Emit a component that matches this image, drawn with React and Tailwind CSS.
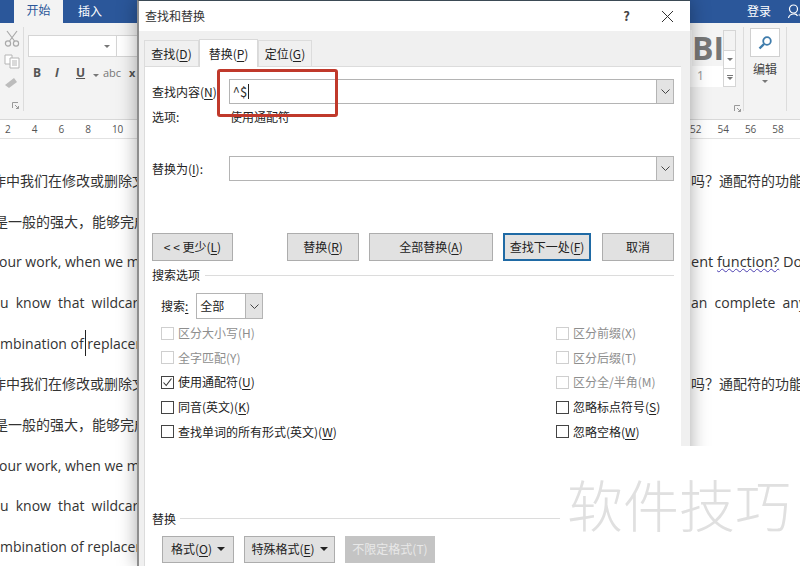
const cjk = "font-['Noto_Sans_CJK_SC','Liberation_Sans',sans-serif]";
const doc = "font-['Open_Sans','Noto_Sans_CJK_SC',sans-serif]";

const zh1 = { left: '作中我们在修改或删除文', right: '吗？通配符的功能', ml: '-ml-[8px]' };
const zh2 = { left: '是一般的强大，能够完成', right: '', ml: '-ml-[6px]' };
const en1 = { left: 'our work, when we m', right: '', ml: '-ml-[1px]' };
const en2 = { left: 'u know that wildcard', right: '', ml: '', size: '[word-spacing:3.5px]' };
const en3 = { left: 'mbination of replacer', right: '', ml: '' };

const lines = [
  zh1,
  zh2,
  { ...en1, wave: true },
  { ...en2, right: 'an complete any' },
  { ...en3, caret: true },
  zh1,
  zh2,
  en1,
  en2,
  en3,
];

function Chevron() {
  return (
    <svg width="9" height="5" viewBox="0 0 9 5">
      <path d="M0.5 0.5 L4.5 4.5 L8.5 0.5" fill="none" stroke="#444" strokeWidth="1" />
    </svg>
  );
}

function Caret() {
  return <span className="ml-[5px] inline-block h-0 w-0 border-x-[4px] border-t-[4px] border-x-transparent border-t-[#222] align-middle" />;
}

function SmallCaret() {
  return <span className="inline-block h-0 w-0 border-x-[3px] border-t-[3px] border-x-transparent border-t-[#777]" />;
}

function Launcher({ className }) {
  return (
    <svg width="7" height="7" viewBox="0 0 7 7" fill="none" stroke="#999" strokeWidth="1" className={className}>
      <path d="M0.5 6 V0.5 H6 M3 3 L6.5 6.5 M6.5 4 V6.5 H4" />
    </svg>
  );
}

function Btn({ className, children }) {
  return (
    <div className={`flex h-[28px] items-center justify-center border border-[#adadad] bg-[#e1e1e1] text-[12px] text-[#222] ${className}`}>
      {children}
    </div>
  );
}

function Combo({ text }) {
  return (
    <div className="flex h-[25px] w-[446px] items-center border border-[#b4b4b4] bg-white">
      <div className="flex h-full flex-1 items-center pl-[3px] text-[13px] text-[#333]">{text}</div>
      <div className="flex h-full w-[17px] items-center justify-center border-l border-[#b4b4b4] bg-[#e3e3e3]">
        <Chevron />
      </div>
    </div>
  );
}

function Check({ label, disabled, checked }) {
  return (
    <div className={`flex h-[24.6px] items-center gap-[4px] text-[12px] ${disabled ? 'text-[#8e8e8e]' : 'text-[#222]'}`}>
      <div className={`flex h-[13px] w-[13px] items-center justify-center border bg-white ${disabled ? 'border-[#cfcfcf]' : 'border-[#444]'}`}>
        {checked && (
          <svg width="11" height="11" viewBox="0 0 11 11">
            <path d="M1.5 5.5 L4.2 8.5 L9.5 1.5" fill="none" stroke="#333" strokeWidth="1.1" />
          </svg>
        )}
      </div>
      <span>{label}</span>
    </div>
  );
}

function U({ children }) {
  return <span className="underline underline-offset-2">{children}</span>;
}

function Ribbon() {
  return (
    <div className="flex h-[97px] justify-between bg-[#f3f3f3]">
      <div className="flex w-[137px] border-b border-[#d8d8d8]">
        <div className="flex w-[23px] flex-col items-center gap-[7px] pt-[7px]">
          <svg width="16" height="17" viewBox="0 0 16 17" fill="none" stroke="#a9a9a9" strokeWidth="1.2">
            <path d="M3 1 L10.5 11 M13 1 L5.5 11" />
            <circle cx="4" cy="13.5" r="2.6" />
            <circle cx="12" cy="13.5" r="2.6" />
          </svg>
          <svg width="16" height="15" viewBox="0 0 16 15" fill="#fff" stroke="#b5b5b5" strokeWidth="1">
            <path d="M1 1 H8 V10 H1 Z" />
            <path d="M6 4 H15 V14 H6 Z" />
            <path d="M8 7 H13 M8 9 H13 M8 11 H13" />
          </svg>
          <svg width="16" height="13" viewBox="0 0 16 13">
            <path d="M1 9 L10 2 L13 6 L5 12 Z" fill="#bcbcbc" />
          </svg>
          <Launcher className="ml-[7px] mt-[6px]" />
        </div>
        <div className="mt-[4px] h-[84px] w-px bg-[#dcdcdc]" />
        <div className="flex flex-col pl-[4px] pt-[12px]">
          <div className="flex h-[22px]">
            <div className="flex w-[89px] items-center justify-end border border-[#d5d5d5] bg-white pr-[6px]">
              <SmallCaret />
            </div>
            <div className="w-[20px] border-y border-[#d5d5d5] bg-white" />
          </div>
          <div className={`mt-[7px] flex items-center pl-[5px] text-[12px] font-bold text-[#555] ${doc}`}>
            <span className="w-[22px]">B</span>
            <span className="w-[21px] italic">I</span>
            <span className="w-[17px] underline">U</span>
            <span className="w-[10px]"><SmallCaret /></span>
            <span className="w-[26px] text-[11px] font-normal text-[#777]">abc</span>
            <span className="text-[11px]">x</span>
          </div>
        </div>
      </div>
      <div className="flex w-[110px] border-b border-[#d8d8d8]">
        <div className="mt-[7px] h-[57px] w-[33px] overflow-hidden bg-white pl-[2px]">
          <div className={`h-[36px] overflow-hidden bg-[#f4f4f4] text-[32px] font-bold leading-[36px] text-[#777] ${doc}`}>BI</div>
          <div className="pl-[5px] text-[12px] leading-[20px] text-[#999]">1</div>
        </div>
        <div className="mt-[7px] flex h-[57px] w-[13px] flex-col border border-[#d5d5d5]">
          <div className="h-[20px] border-b border-[#d5d5d5]" />
          <div className="flex h-[18px] items-center justify-center border-b border-[#d5d5d5] bg-white"><SmallCaret /></div>
          <div className="flex flex-1 flex-col items-center justify-center bg-white"><span className="mb-px h-px w-[6px] bg-[#777]" /><SmallCaret /></div>
        </div>
        <div className="ml-[7px] mt-[4px] h-[84px] w-px bg-[#dcdcdc]" />
        <div className="flex w-[42px] flex-col items-center pt-[5px]">
          <div className="flex h-[29px] w-[30px] items-center justify-center border border-[#d0d0d0] bg-white">
            <svg width="15" height="15" viewBox="0 0 15 15" fill="none" stroke="#3f7cac" strokeWidth="1.8">
              <circle cx="9" cy="6" r="3.8" />
              <path d="M6 9 L1.5 13.5" strokeWidth="2.4" />
            </svg>
          </div>
          <div className={`mt-[3px] text-[12px] text-[#444] ${cjk}`}>编辑</div>
          <span className="mt-[2px] flex"><SmallCaret /></span>
        </div>
        <div className="mt-[4px] h-[84px] w-px bg-[#dcdcdc]" />
      </div>
    </div>
  );
}

function Dialog() {
  return (
    <div className={`absolute left-[137px] top-0 flex h-[566px] w-[553px] flex-col border-l-2 border-t border-l-[#8e8e8e] border-t-[#3b4a55] bg-[#f0f0f0] shadow-[0_0_18px_rgba(0,0,0,0.35)] ${cjk}`}>
      <div className="flex h-[30px] shrink-0 items-center justify-between bg-white pl-[6px] pr-[16px] text-[12px] text-[#333]">
        <span>查找和替换</span>
        <div className="flex items-center gap-[31px]">
          <span className="text-[13px] font-bold text-[#444]">?</span>
          <svg width="13" height="13" viewBox="0 0 13 13">
            <path d="M1 1 L12 12 M12 1 L1 12" stroke="#333" strokeWidth="1" />
          </svg>
        </div>
      </div>
      <div className="flex h-[35px] shrink-0 items-end pl-[5px] text-[12px] text-[#222]">
        <div className="flex h-[26px] w-[55px] items-center justify-center border border-b-0 border-[#dcdcdc]">查找(<U>D</U>)</div>
        <div className="relative z-10 -mb-px flex h-[28px] w-[59px] items-center justify-center border border-b-0 border-[#d9d9d9] bg-white">替换(<U>P</U>)</div>
        <div className="flex h-[26px] w-[54px] items-center justify-center border border-b-0 border-[#dcdcdc]">定位(<U>G</U>)</div>
      </div>
      <div className="ml-[5px] flex w-[537px] flex-1 flex-col border-l border-t border-[#dcdcdc] bg-white px-[7px] text-[12px] text-[#222]">
        <div className="mt-[12px] flex items-center">
          <span className="w-[77px]">查找内容(<U>N</U>)</span>
          <Combo text={<><span>^$</span><span className="ml-px h-[15px] w-px bg-[#222]" /></>} />
        </div>
        <div className="mt-[4px] flex h-[18px] items-center">
          <span className="w-[78px]">选项:</span>
          <span>使用通配符</span>
        </div>
        <div className="mt-[30px] flex items-center">
          <span className="w-[77px]">替换为(<U>I</U>):</span>
          <Combo />
        </div>
        <div className="mt-[52px] flex">
          <Btn className="w-[81px]">&lt; &lt; 更少(<U>L</U>)</Btn>
          <Btn className="ml-[54px] w-[72px]">替换(<U>R</U>)</Btn>
          <Btn className="ml-[10px] w-[124px]">全部替换(<U>A</U>)</Btn>
          <Btn className="ml-[10px] w-[88px] border-2 border-[#1f6aa5]!">查找下一处(<U>F</U>)</Btn>
          <Btn className="ml-[11px] w-[72px]">取消</Btn>
        </div>
        <div className="mt-[5px] flex h-[18px] items-center gap-[5px] whitespace-nowrap">
          <span>搜索选项</span>
          <div className="h-px w-[470px] bg-[#dcdcdc]" />
        </div>
        <div className="ml-[9px] mt-[9px] flex items-center gap-[8px]">
          <span>搜索<span className="underline underline-offset-2">:</span></span>
          <div className="flex h-[26px] w-[67px] items-center border border-[#b4b4b4]">
            <span className="flex-1 pl-[3px] text-[12px]">全部</span>
            <div className="flex h-full w-[17px] items-center justify-center border-l border-[#b4b4b4] bg-[#e3e3e3]"><Chevron /></div>
          </div>
        </div>
        <div className="ml-[9px] mt-[2px] flex w-[522px] justify-between">
          <div className="flex flex-col">
            <Check disabled label="区分大小写(H)" />
            <Check disabled label="全字匹配(Y)" />
            <Check checked label={<>使用通配符(<U>U</U>)</>} />
            <Check label={<>同音(英文)(<U>K</U>)</>} />
            <Check label={<>查找单词的所有形式(英文)(<U>W</U>)</>} />
          </div>
          <div className="flex w-[127px] flex-col">
            <Check disabled label="区分前缀(X)" />
            <Check disabled label="区分后缀(T)" />
            <Check disabled label="区分全/半角(M)" />
            <Check label={<>忽略标点符号(<U>S</U>)</>} />
            <Check label={<>忽略空格(<U>W</U>)</>} />
          </div>
        </div>
        <div className="mt-[66px] flex h-[18px] items-center gap-[4px]">
          <span>替换</span>
          <div className="h-px w-[380px] bg-[#dcdcdc]" />
        </div>
        <div className="ml-[10px] mt-[8px] flex gap-[10px]">
          <Btn className="h-[27px]! w-[72px]">格式(<U>O</U>)<Caret /></Btn>
          <Btn className="h-[27px]! w-[91px]">特殊格式(<U>E</U>)<Caret /></Btn>
          <Btn className="h-[27px]! w-[90px] border-[#c4c4c4]! bg-[#c4c4c4]! text-[#e8e8e8]!">不限定格式(T)</Btn>
        </div>
      </div>
    </div>
  );
}

export default function App() {
  return (
    <div className="relative h-[566px] w-[800px] overflow-hidden bg-white">
      {/* word behind the dialog */}
      <div className={`flex h-[23px] bg-[#2b579a] text-[12px] text-white ${cjk}`}>
        <div className="ml-[14px] flex h-full w-[49px] items-center justify-center bg-[#f3f3f3] pb-[3px] text-[#2b579a]">开始</div>
        <div className="ml-[15px] pt-[2px]">插入</div>
        <div className="ml-auto mr-[16px] pt-[2px]">登录</div>
        <svg width="16" height="17" viewBox="0 0 15 17" fill="none" stroke="#fff" strokeWidth="1.2" className="-mr-[3px] mt-[3px] shrink-0">
          <circle cx="6" cy="6" r="4" />
          <path d="M1 15 C2 10 9 10 10 13 M11 12 H15 M13 10 V14" />
        </svg>
      </div>
      <Ribbon />
      <Launcher className="absolute left-[734px] top-[105px]" />
      <div className={`flex h-[19px] items-center justify-between border-b border-[#e2e2e2] bg-white text-[10px] text-[#555] ${doc}`}>
        <div className="flex w-[137px] gap-[21px] pl-[5px]"><span>2</span><span>4</span><span>6</span><span>8</span><span>10</span></div>
        <div className="flex w-[110px] gap-[16px]"><span>52</span><span>54</span><span>56</span><span>58</span></div>
      </div>
      <div className={`flex flex-col pt-[21px] text-[14px] text-[#333] ${doc}`}>
        {lines.map((line, i) => (
          <div key={i} className={`relative flex h-[40.7px] items-center justify-between whitespace-pre ${line.size || ''}`}>
            <div className="w-[137px] overflow-hidden">
              <div className={line.ml}>{line.left}</div>
            </div>
            {line.caret && <span className="absolute left-[85px] top-[7px] h-[26px] w-px bg-[#222]" />}
            <div className="w-[110px] overflow-hidden pl-[1px]">
              {line.wave ? <span className="text-[14.5px]">ent <span className="underline decoration-[#4b3fb0] decoration-wavy decoration-1">function?</span> Do</span> : line.right}
            </div>
          </div>
        ))}
      </div>

      <Dialog />

      {/* red mark on the find box */}
      <div className="absolute left-[217px] top-[69px] h-[48px] w-[121px] rounded-[3px] border-[3px] border-[#c0392b]" />

      {/* white block with the watermark */}
      <div className="absolute left-[681px] top-[446px] h-[120px] w-[119px] bg-white" />
      <div className={`absolute left-[567px] top-[470px] text-[56px] font-light leading-[66px] text-[#e0e0e0] ${cjk}`}>软件技巧</div>
    </div>
  );
}
